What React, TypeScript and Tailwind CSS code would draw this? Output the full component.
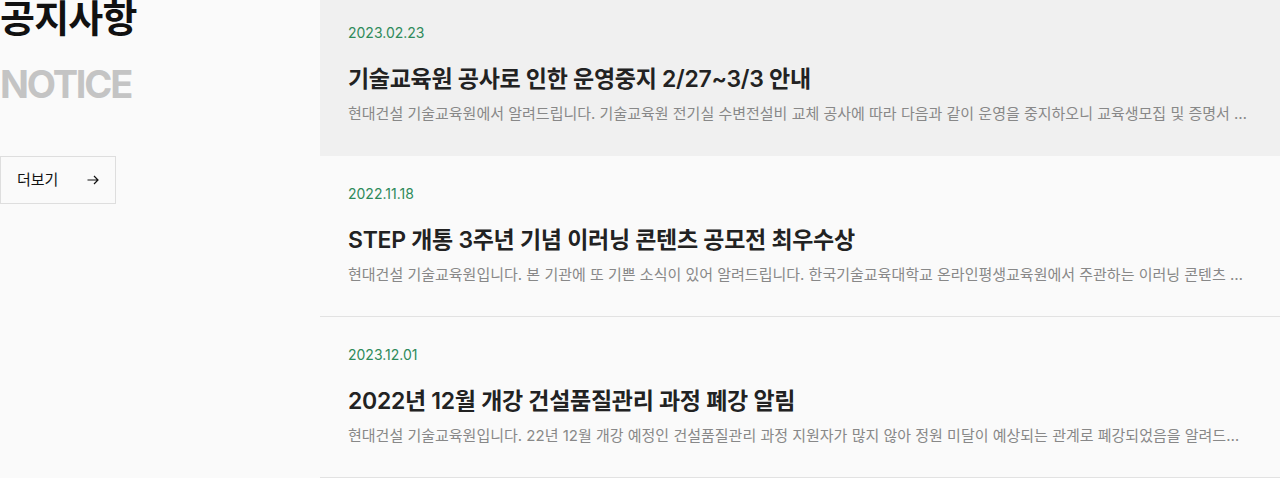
import React from "react";

const items = [
  {
    date: "2023.02.23",
    title: "기술교육원 공사로 인한 운영중지 2/27~3/3 안내",
    desc: "현대건설 기술교육원에서 알려드립니다. 기술교육원 전기실 수변전설비 교체 공사에 따라 다음과 같이 운영을 중지하오니 교육생모집 및 증명서 발급 등 업무에 참고하시기 바랍니다.",
    active: true,
  },
  {
    date: "2022.11.18",
    title: "STEP 개통 3주년 기념 이러닝 콘텐츠 공모전 최우수상",
    desc: "현대건설 기술교육원입니다. 본 기관에 또 기쁜 소식이 있어 알려드립니다. 한국기술교육대학교 온라인평생교육원에서 주관하는 이러닝 콘텐츠 공모전에서 최우수상을 수상하였습니다.",
    active: false,
  },
  {
    date: "2023.12.01",
    title: "2022년 12월 개강 건설품질관리 과정 폐강 알림",
    desc: "현대건설 기술교육원입니다. 22년 12월 개강 예정인 건설품질관리 과정 지원자가 많지 않아 정원 미달이 예상되는 관계로 폐강되었음을 알려드리며 양해 부탁드립니다.",
    active: false,
  },
];

const font = { fontFamily: 'Inter, "Noto Sans CJK KR", sans-serif' };

export default function App() {
  return (
    <div className="w-[1280px] h-[478px] overflow-hidden bg-[#fafafa]" style={font}>
      <div className="flex -mt-[5px]">
        <div className="w-[320px] shrink-0 flex flex-col">
          <h2 className="text-[38px] leading-[46px] font-bold text-[#111] tracking-[-0.8px]">공지사항</h2>
          <div className="mt-[20px] text-[38px] leading-[46px] font-bold text-[#c4c4c4] tracking-[-2.2px]">NOTICE</div>
          <a className="mt-[49px] w-[116px] h-[48px] border border-[#dedede] flex items-center justify-between pl-[16px] pr-[16px] text-[15px] text-[#111]">
            <span>더보기</span>
            <svg width="12" height="10" viewBox="0 0 12 10" fill="none" stroke="#111" strokeWidth="1.2">
              <path d="M0.5 5H11M7 1L11 5L7 9" />
            </svg>
          </a>
        </div>
        <div className="flex-1 min-w-0 flex flex-col">
          {items.map((it, i) => (
            <div
              key={i}
              className={`h-[161px] px-[28px] pt-[29px] border-b ${it.active ? "bg-[#f0f0f0] border-[#f0f0f0]" : "border-[#e2e2e2]"}`}
            >
              <div className="text-[14px] leading-[18px] text-[#2e8a5a]">{it.date}</div>
              <div className="mt-[21px] text-[23px] leading-[32px] font-semibold text-[#222] tracking-[-0.3px]">{it.title}</div>
              <div className="mt-[8px] text-[15px] leading-[22px] text-[#888] truncate">{it.desc}</div>
            </div>
          ))}
        </div>
      </div>
    </div>
  );
}
